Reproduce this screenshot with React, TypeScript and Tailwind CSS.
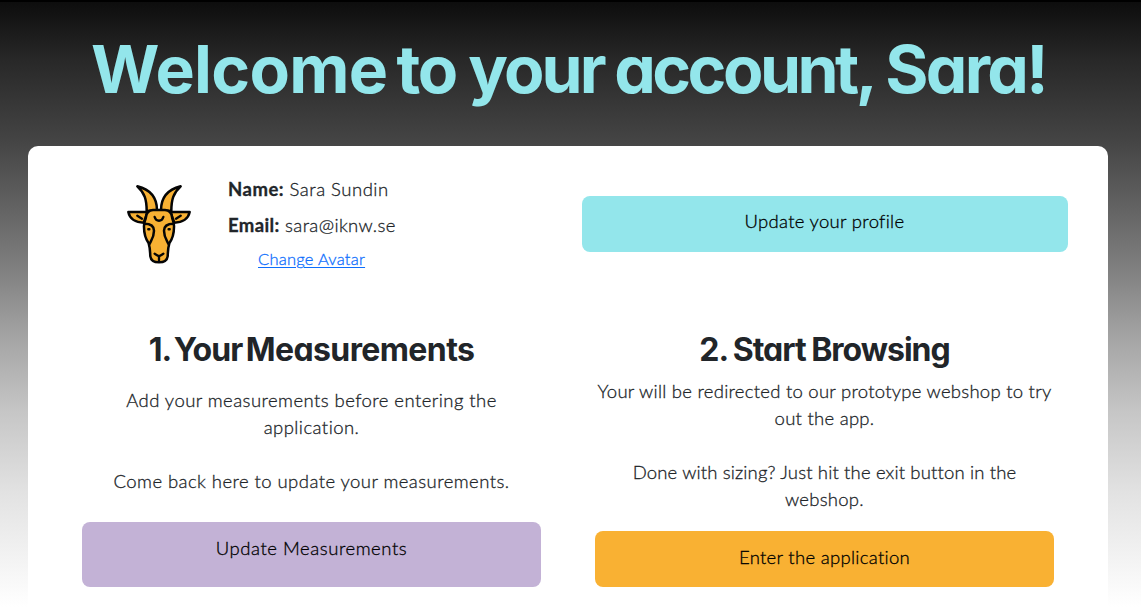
import type { ReactNode } from 'react';

function Goat() {
  return (
    <svg
      className="h-[81px] w-[66px] shrink-0"
      viewBox="48 41 198 243"
      fill="#f8b133"
      stroke="#050505"
      strokeWidth="7.5"
      strokeLinecap="round"
      strokeLinejoin="round"
      aria-label="Goat avatar"
    >
      <path d="M110 122C110 88 104 68 82 48C122 58 141 80 141 120Z" />
      <path d="M184 122C184 88 190 68 212 48C172 58 153 80 153 120Z" />
      <path d="M113 125H55C59 145 76 157 101 157Z" />
      <path d="M181 125H239C235 145 218 157 193 157Z" />
      <path d="M129 119H165C179 120 185 129 186 140C187 150 193 155 192 170C192 190 187 206 178 219C173 235 174 247 173 258C171 272 160 276 147 276C134 276 123 272 121 258C120 247 121 235 116 219C107 206 102 190 102 170C101 155 107 150 108 140C109 129 115 120 129 119Z" />
      <path d="M103 160C124 160 132 167 132 181C132 201 124 209 118 222M191 160C170 160 162 167 162 181C162 201 170 209 176 222" fill="none" />
      <path d="M134 140C138 155 156 155 160 140M82 136L96 145M212 136L198 145M134 250Q139 253 147 258Q155 253 160 250M147 258V270" fill="none" strokeWidth="7" />
      <path d="M115 177H118M176 177H179" strokeWidth="7.5" />
    </svg>
  );
}

function Action({ className, children }: { className: string; children: ReactNode }) {
  return (
    <button className={`block w-full rounded-lg text-center text-[18.5px] leading-[27px] text-black ${className}`}>
      {children}
    </button>
  );
}

const headingFont = "font-['Inter',sans-serif] font-bold [font-feature-settings:'cv11'] [-webkit-text-stroke:0]";

export default function App() {
  return (
    <div className="h-[607px] overflow-hidden border-t-2 border-black bg-[linear-gradient(to_bottom,#0d0d0d_0px,#282828_58px,#444444_138px,#606060_200px,#808080_268px,#a4a4a4_335px,#c6c6c6_410px,#e2e2e2_490px,#ffffff_605px)] font-['Lato',sans-serif] font-light text-[#212529] [-webkit-text-stroke:0.3px]">
      <h1 className={`${headingFont} ml-[91px] mt-[27px] h-[117px] whitespace-nowrap text-[66px] leading-[80px] tracking-[-2.6px] text-[#93e6eb]`}>
        <span className="mr-[-4px] tracking-[-0.7px]">Welcome</span>{' '}
        <span className="mr-[-1px] tracking-[-2.1px]">to</span>{' '}
        <span className="mr-[-2.5px] tracking-[-2.9px]">your</span>{' '}
        <span className="mr-[-2px] tracking-[-3.5px]">account,</span>{' '}
        <span className="tracking-[-2.7px]">Sara!</span>
      </h1>
      <main className="ml-[28px] h-[600px] w-[1080px] rounded-[10px] bg-white px-[27px] pt-[30px]">
        <section className="grid h-[154px] grid-cols-2">
          <div className="flex gap-[36px] pl-[71px]">
            <div className="pt-[8px]">
              <Goat />
            </div>
            <div className="text-[18.5px] leading-[27px]">
              <p className="tracking-[0.5px]"><b className="font-bold">Name:</b> Sara Sundin</p>
              <p className="mt-[9px] tracking-[0.38px]"><b className="font-bold">Email:</b> sara@iknw.se</p>
              <a className="ml-[30px] mt-[8px] block text-[16.5px] leading-[24px] tracking-[0.25px] text-[#0d6efd] underline underline-offset-2">Change Avatar</a>
            </div>
          </div>
          <div className="px-[13.5px] pt-[19.5px]">
            <Action className="h-[56px] bg-[#93e6eb] pb-[5px] tracking-[0.3px]">Update your profile</Action>
          </div>
        </section>
        <section className="grid grid-cols-2 text-center">
          <div className="px-[27px]">
            <h2 className={`${headingFont} text-[32px] leading-[40px] tracking-[-1px] [word-spacing:-3px]`}>
              1. Your <span className="tracking-[-0.6px]">Measurements</span>
            </h2>
            <p className="mt-[17px] whitespace-nowrap text-[18.5px] leading-[27px] tracking-[0.44px]">
              Add your measurements before entering the<br />application.<br /><br />Come back here to update your measurements.
            </p>
            <Action className="mt-[27px] h-[65px] bg-[#c3b2d6] pb-[13px] tracking-[0.55px]">Update Measurements</Action>
          </div>
          <div className="px-[27px]">
            <h2 className={`${headingFont} text-[32px] leading-[40px] tracking-[-1px] [word-spacing:-1px]`}>2. Start Browsing</h2>
            <p className="mt-[8px] whitespace-nowrap text-[18.5px] leading-[27px] tracking-[0.26px]">
              Your will be redirected to our prototype webshop to try<br />out the app.<br /><br />
              <span className="tracking-[0.15px]">Done with sizing? Just hit the exit button in the</span><br />webshop.
            </p>
            <Action className="mt-[18px] h-[56px] bg-[#f9b133] pb-[4px] tracking-[0.3px]">Enter the application</Action>
          </div>
        </section>
      </main>
    </div>
  );
}
